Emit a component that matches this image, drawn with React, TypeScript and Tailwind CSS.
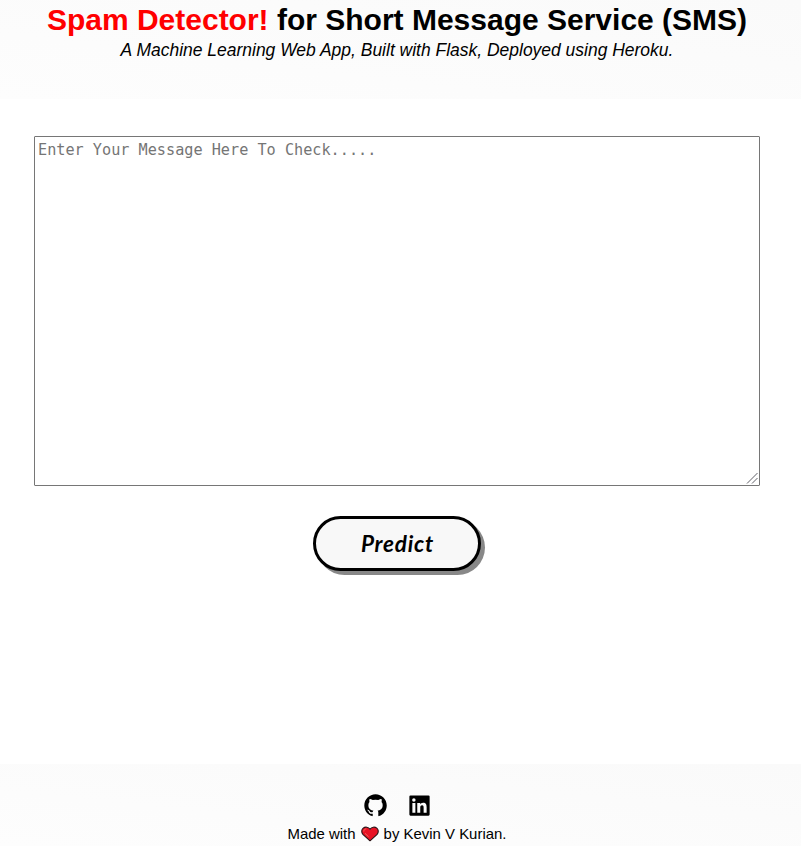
import { BiLogoGithub, BiLogoLinkedinSquare } from "react-icons/bi";

function Heart() {
  return (
    <svg viewBox="0 0 18 16" className="mx-[5px] h-4 w-[18px] shrink-0">
      <path
        d="M9 14.8 L1.9 8.4 C0.2 6.4 0.4 3.4 2.2 2.1 C4.2 0.6 7.3 0.8 9 3.2 C10.7 0.8 13.8 0.6 15.8 2.1 C17.6 3.4 17.8 6.4 16.1 8.4 Z"
        fill="#e81224"
        stroke="#2a1517"
        strokeWidth="1.1"
        strokeLinejoin="round"
      />
      <path d="M2.8 5.5 C2.8 4 3.8 2.9 5.3 2.9 M4 7.3 L7.6 10.8" stroke="#f2695f" strokeWidth="1" fill="none" />
    </svg>
  );
}

export default function App() {
  return (
    <div className="flex h-[846px] w-full flex-col overflow-hidden bg-white font-['Liberation_Sans',sans-serif] text-black">
      <header className="flex h-[99px] shrink-0 flex-col items-center bg-linear-to-tr from-[#fdfdfd] to-[#fafafa] pr-[7px]">
        <h1 className="mt-px text-[30px] leading-[37px] font-bold whitespace-nowrap">
          <span className="text-[#ff0000]">Spam Detector!</span> for Short Message Service (SMS)
        </h1>
        <p className="text-[17.48px] leading-6 whitespace-nowrap italic">
          A Machine Learning Web App, Built with Flask, Deployed using Heroku.
        </p>
      </header>
      <main className="flex grow flex-col items-center pt-[37px] pr-[7px]">
        <div className="relative h-[350px] w-[726px] shrink-0">
          <textarea
            placeholder="Enter Your Message Here To Check....."
            className="block h-full w-full resize-none rounded-[1px] border border-[#767676] bg-white px-[3px] pt-[3px] font-['DejaVu_Sans_Mono',monospace] text-[15.2px] leading-5 placeholder:text-[#757575]"
          />
          <svg
            viewBox="0 0 12 12"
            className="pointer-events-none absolute right-[2px] bottom-[2px] size-3"
            stroke="#606068"
            strokeWidth="1"
          >
            <path d="M1 11.5 L11.5 1 M6 11.5 L11.5 6" />
          </svg>
        </div>
        <button className="mt-[30px] h-[55px] w-[168px] shrink-0 rounded-full border-[3px] border-black bg-[#f8f8f8] pl-px font-['Lato',sans-serif] text-[22.5px] font-bold tracking-[0.8px] italic shadow-[4px_4px_0_#888888]">
          Predict
        </button>
      </main>
      <footer className="flex h-[82px] shrink-0 flex-col items-center bg-linear-to-tr from-[#fdfdfd] to-[#fafafa] pt-[28px] pr-[7px]">
        <div className="flex gap-[17px]">
          <BiLogoGithub size={27} />
          <BiLogoLinkedinSquare size={27} />
        </div>
        <div className="flex items-center text-[14.95px] leading-[30px] whitespace-nowrap">
          <span>Made with</span>
          <Heart />
          <span>by Kevin V Kurian.</span>
        </div>
      </footer>
    </div>
  );
}
